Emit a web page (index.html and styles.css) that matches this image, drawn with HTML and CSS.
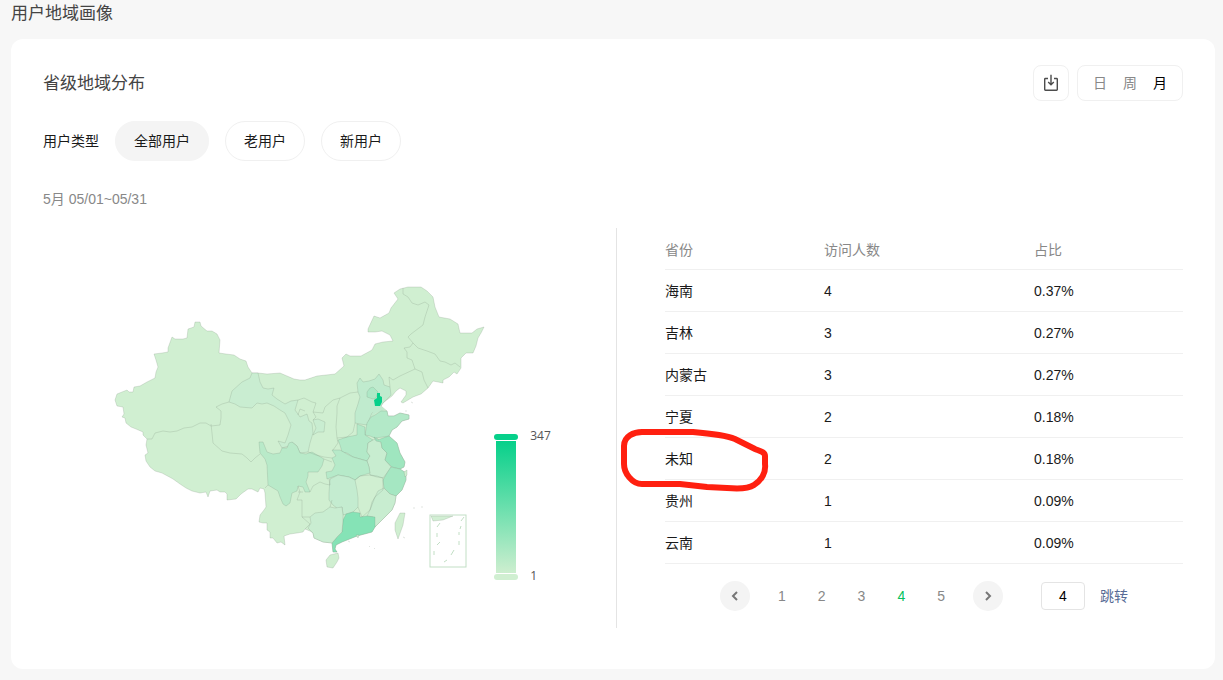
FILE: index.html
```html
<!DOCTYPE html>
<html lang="zh-CN">
<head>
    <meta charset="UTF-8">
    <meta name="viewport" content="width=device-width, initial-scale=1.0">
    <title>用户地域画像</title>
    <link rel="stylesheet" href="styles.css">
</head>
<body>
    <h1>用户地域画像</h1>
    <main class="card">
        <header class="card-header">
            <h2>省级地域分布</h2>
            <div class="tools">
                <button class="btn-download" type="button" aria-label="下载">
                    <svg width="16" height="18" viewBox="0 0 16 18" fill="none" stroke="#4c4c4c" stroke-width="1.400">
                        <path d="M5 4.500H2.400a.7.7 0 0 0-.7.7v10.400c0 .4.3.7.7.7h11.200c.4 0 .7-.3.7-.7V5.200c0-.4-.3-.7-.7-.7H11"/>
                        <path d="M8 .8v10M5.200 8l2.800 2.800L10.800 8"/>
                    </svg>
                </button>
                <div class="period">
                    <button type="button">日</button>
                    <button type="button">周</button>
                    <button type="button" class="active">月</button>
                </div>
            </div>
        </header>

        <div class="filters">
            <span>用户类型</span>
            <button type="button" class="active">全部用户</button>
            <button type="button">老用户</button>
            <button type="button">新用户</button>
        </div>
        <p class="date">5月 05/01~05/31</p>

        <div class="content">
            <!-- 地图 -->
            <section class="map-panel">
                <svg class="map" viewBox="112 284 376 296" role="img" aria-label="中国地图">
                    <path class="land" d="M115 400L117 394 122 392 127 390 129 392 133 392 134 387 140 386 147 382 155 378 156 372 158 367 156 360 154 354 162 353 168 352 168 348 172 337 175 339 183 339 187 338 188 329 194 327 195 322 200 322 201 326 207 331 212 331 217 334 220 340 219 353 226 354 234 355 240 359 246 361 248 367 252 373 258 373 267 374 280 373 287 376 294 379 300 380 305 380 317 376 335 374 344 366 342 358 346 354 350 356 361 356 372 350 375 344 383 342 393 341 390 335 382 331 375 332 368 332 368 329 374 316 380 318 389 313 391 308 398 299 394 293 400 289 408 287 421 287 427 291 433 297 435 307 439 317 450 319 458 324 460 333 472 333 477 329 484 327 481 333 478 338 476 346 473 353 466 353 461 358 461 368 457 374 454 372 449 377 443 380 443 383 433 381 428 388 421 394 413 397 403 403 401 402 406 395 406 391 400 388 396 391 392 396 383 403 381 406 387 411 388 416 394 416 400 413 409 415 409 419 402 421 397 427 392 430 389 436 397 443 400 453 405 462 404 467 400 469 406 473 406 480 402 490 396 496 395 503 392 510 383 519 375 527 372 532 357 536 342 542 336 545 335 549 337 552 333 552 332 543 323 542 314 538 313 533 310 531 305 529 303 532 297 533 290 534 284 536 285 545 281 542 277 543 273 538 270 538 270 532 267 530 267 523 263 523 259 522 260 515 264 510 266 507 265 493 264 489 260 488 258 492 252 489 248 489 241 494 236 499 227 500 227 494 225 492 220 492 217 490 210 491 208 497 206 492 200 493 192 491 186 488 180 484 173 479 162 473 155 471 150 467 146 461 145 455 148 453 146 445 147 439 143 435 143 432 136 429 131 427 126 423 125 418 122 417 124 414 123 407 117 406Z"/>
                    <path fill="#c9edd1" d="M252 373L258 373 260 382 263 388 268 389 274 388 272 395 277 399 285 404 291 401 298 400 295 410 300 417 307 414 309 421 312 423 313 433 310 443 308 452 300 453 297 446 292 442 289 446 282 448 278 441 285 443 288 435 291 425 285 413 280 410 274 406 267 403 262 404 257 403 252 408 240 407 235 404 229 402 232 391 242 382 250 378Z"/>
                    <path fill="#c9edd1" d="M313 420L318 419 325 422 324 432 318 432 313 435 316 428Z"/>
                    <path fill="#b9eac9" d="M259 442L263 442 267 452 273 454 280 453 282 448 287 448 289 443 292 442 297 446 300 453 306 454 312 452 324 459 322 466 318 472 314 472 308 472 308 476 306 482 310 492 305 492 303 487 298 486 297 491 292 493 290 503 286 506 283 504 280 497 278 491 273 488 268 485 267 465 265 459 260 453Z"/>
                    <path fill="#c0ebce" d="M358 392L357 383 360 378 363 382 369 381 375 379 379 374 383 380 384 385 390 387 391 395 383 403 381 406 376 410 372 413 367 425 360 424 355 423 355 413 358 404 360 397Z"/>
                    <path fill="#c0ebce" d="M376 404L381 406 385 410 376 413 371 417Z" class="plain"/>
                    <path fill="#aee8c6" d="M367 392L370 388 373 387 376 390 378 392 376 398 373 399 367 397Z"/>
                    <path fill="#06d08a" class="plain" d="M377 393L380 393 380 396 382 397 382 402 380 406 375 406 374 400 377 398Z"/>
                    <path fill="#b3e9c8" d="M367 423L371 417 375 415 381 411 387 411 388 416 394 416 400 413 409 415 409 419 402 421 397 427 392 430 389 436 383 437 375 438 370 436 365 435Z"/>
                    <path fill="#b3e9c8" d="M338 440L347 437 357 435 357 424 365 427 365 435 373 440 368 443 367 452 370 456 367 461 360 459 353 457 347 453 342 452 340 445Z"/>
                    <path fill="#c8edd0" d="M373 440L377 438 381 442 382 448 387 453 385 460 391 467 387 473 383 478 377 477 370 475 369 467 367 461 370 456 367 452 368 443Z"/>
                    <path fill="#9fe6bf" d="M374 437L378 440 383 438 389 436 397 443 400 453 405 462 404 467 400 469 392 467 385 460 387 453 382 448 381 442 376 441Z"/>
                    <path fill="#a5e7c2" d="M391 467L400 469 406 473 406 480 402 490 396 496 390 494 384 488 383 480 387 473Z"/>
                    <path fill="#b6eac9" d="M332 458L336 456 332 450 340 450 347 454 353 457 360 459 367 461 369 467 370 473 360 476 355 480 349 477 338 475 327 479 326 472 332 471 335 465Z"/>
                    <path fill="#c4ecd0" d="M330 479L338 475 349 477 355 480 356 485 357 490 358 498 358 507 353 512 343 515 342 507 338 509 333 505 329 500 329 493Z"/>
                    <path fill="#c8edd0" d="M384 488L390 494 396 496 395 503 392 510 383 519 375 527 373 517 367 516 370 510 372 502 375 497 378 491Z"/>
                    <path fill="#85e3b6" d="M353 512L360 513 360 517 367 516 375 517 375 527 372 532 357 536 342 542 336 545 335 549 337 552 333 552 332 543 337 537 342 532 343 520 346 514Z"/>
                    <path fill="#c9edd1" d="M310 517L315 513 323 512 330 507 335 508 342 507 343 515 343 520 342 532 337 537 332 543 323 542 314 538 313 533 308 528 311 523Z"/>
                    <!-- 省界 -->
                    <g class="borders">
                        <path d="M229 402L222 404 216 407 221 411 221 418 220 425 211 426 206 423 200 423 192 427 184 428 177 431 170 432 163 431 155 433 152 439 147 439"/>
                        <path d="M211 424L212 433 213 443 222 451 230 453 242 454 247 458 251 462 255 458 260 454M268 485L265 488M298 400L304 398 312 402 316 403 313 412 323 413 325 407 333 400 340 398 350 393 358 392"/>
                        <path d="M298 415L300 409 305 411M313 412L316 417 313 420M340 398L337 406 337 413 336 427 337 438 347 437 353 432 355 423M337 438L338 443 333 450M308 452L316 455 324 457 332 458"/>
                        <path d="M390 387L389 377 393 380 400 376 415 369 422 372 424 380 428 388M415 369L412 360 407 358 407 352 404 348 410 347 413 343 408 337 411 334 423 325 425 317 429 305 425 302 418 305 412 303 408 297 403 294 403 288M413 343L418 348 427 351 435 354 440 361 445 362 451 365 455 363 460 367"/>
                        <path d="M355 480L360 476 370 475 377 476 383 478 383 490 375 497 370 510 362 517 358 507M310 492L313 486 320 482 325 484 330 485 329 479M298 492L303 492M298 486L300 492 297 500 302 500 302 505 302 517 310 517M302 517L310 524 305 529M332 500L330 507M324 459L332 462"/>
                    </g>
                    <path class="land" d="M326 560L330 555 338 553 339 558 337 562 333 568 327 567ZM400 513L405 513 403 525 398 539 395 530 395 523ZM404 472L407 470 407 475 405 477ZM356 535L359 535 358 538ZM413 508L415 508M421 507L423 507M369 546L370 547M374 548L375 549M348 541L350 542M403 537L405 538M405 411L407 411M411 402L413 403"/>
                    <path fill="#d2efd4" d="M431 516H453L443 520 433 521Z"/>
                    <rect class="inset" x="430" y="515" width="36" height="52"/>
                    <path class="dashes" d="M440 523L437 527M437 533V537M440 542L437 545M434 551V555M444 562L447 560M454 550L451 555M459 541L459 545M459 532V535M461 526L460 529M464 517L461 521"/>
                </svg>
                <div class="legend">
                    <div class="legend-bar">
                        <i class="cap high"></i>
                        <i class="ramp"></i>
                        <i class="cap low"></i>
                    </div>
                    <div class="legend-text">
                        <span>347</span>
                        <span>1</span>
                    </div>
                </div>
            </section>

            <!-- 数据表 -->
            <section class="table-panel">
                <table>
                    <thead>
                        <tr><th>省份</th><th>访问人数</th><th>占比</th></tr>
                    </thead>
                    <tbody>
                        <tr><td>海南</td><td>4</td><td>0.37%</td></tr>
                        <tr><td>吉林</td><td>3</td><td>0.27%</td></tr>
                        <tr><td>内蒙古</td><td>3</td><td>0.27%</td></tr>
                        <tr><td>宁夏</td><td>2</td><td>0.18%</td></tr>
                        <tr>
                            <td class="marked">未知
                                <svg class="mark" width="150" height="66" viewBox="619 427 150 66">
                                    <path d="M642 432C634 432 624 436 624 446V464C624 473 632 484 642 484L680 484 707 487 727 488C738 489 748 489 754 485C762 480 766 472 765 464V456C765 452 760 451 755 449L735 439C725 435 705 433 693 432Z"/>
                                </svg>
                            </td>
                            <td>2</td><td>0.18%</td>
                        </tr>
                        <tr><td>贵州</td><td>1</td><td>0.09%</td></tr>
                        <tr><td>云南</td><td>1</td><td>0.09%</td></tr>
                    </tbody>
                </table>
                <nav class="pager">
                    <button class="arrow" type="button" aria-label="上一页">
                        <svg width="8" height="12" viewBox="0 0 8 12"><path d="M6 2L2 6l4 4"/></svg>
                    </button>
                    <div class="pages">
                        <a href="#">1</a>
                        <a href="#">2</a>
                        <a href="#">3</a>
                        <a href="#" class="active">4</a>
                        <a href="#">5</a>
                    </div>
                    <button class="arrow" type="button" aria-label="下一页">
                        <svg width="8" height="12" viewBox="0 0 8 12"><path d="M2 2l4 4-4 4"/></svg>
                    </button>
                    <input type="text" value="4" aria-label="页码">
                    <a href="#" class="jump">跳转</a>
                </nav>
            </section>
        </div>
    </main>
</body>
</html>
```
FILE: styles.css
```css
* {
    box-sizing: border-box;
}
body {
    margin: 0;
    padding: 0 8px 11px 11px;
    background-color: #f7f7f7;
    font-family: "Liberation Sans", "Noto Sans CJK SC", sans-serif;
    font-size: 14px;
    line-height: 20px;
    color: #1a1a1a;
}
h1, h2 {
    margin: 0;
    padding-top: 2px;
    font-size: 17px;
    font-weight: 400;
    line-height: 24px;
    color: #444;
}
h1 {
    margin-bottom: 13px;
}
button, input {
    font: inherit;
    color: inherit;
}
button {
    padding: 0;
    border: none;
    background: none;
    cursor: pointer;
}
a {
    color: inherit;
    text-decoration: none;
}
.card {
    background-color: #fff;
    border-radius: 12px;
    padding: 26px 32px 41px;
}
.card-header {
    display: flex;
    justify-content: space-between;
    align-items: center;
    height: 36px;
}
.tools {
    display: flex;
    gap: 8px;
}
.btn-download, .period {
    display: flex;
    align-items: center;
    justify-content: center;
    height: 36px;
    border: 1px solid #f0f0f0;
    border-radius: 8px;
}
.btn-download {
    width: 36px;
}
.period {
    gap: 16px;
    padding: 0 15px;
    color: #888;
}
.period .active {
    color: #000;
}

/* 用户类型 */
.filters {
    display: flex;
    align-items: center;
    gap: 16px;
    margin-top: 20px;
}
.filters button {
    height: 40px;
    padding: 0 18px;
    border: 1px solid #f0f0f0;
    border-radius: 20px;
}
.filters .active {
    background-color: #f4f4f4;
    border-color: #f4f4f4;
}
.date {
    margin: 28px 0 19px;
    color: #888;
}

.content {
    display: grid;
    grid-template-columns: 573fr 567fr;
    min-height: 400px;
}
.map-panel {
    display: flex;
    justify-content: center;
    align-items: flex-end;
    padding: 0 4px 48px 8px;
}
.map {
    width: 376px;
    height: 296px;
    margin-right: 6px;
}
.map path {
    stroke: rgba(120, 135, 120, 0.22);
    stroke-width: 1;
    stroke-linejoin: round;
}
.map .plain {
    stroke: none;
}
.map .land {
    fill: #d0efd1;
}
.map .borders path {
    fill: none;
}
.map .inset, .map .dashes {
    fill: none;
    stroke: #c2dfc5;
}
.legend {
    display: flex;
    gap: 12px;
}
.legend-bar {
    display: flex;
    flex-direction: column;
    align-items: center;
    gap: 1px;
}
.cap {
    width: 24px;
    height: 6px;
    border-radius: 3px;
}
.high {
    background-color: #06d08a;
}
.low {
    background-color: #d0efd1;
}
.ramp {
    width: 20px;
    height: 132px;
    background: linear-gradient(#06d08a, #cdeecf);
}
.legend-text {
    display: flex;
    flex-direction: column;
    justify-content: space-between;
    margin-top: -2px;
    font-family: "Open Sans", sans-serif;
    font-size: 12px;
    line-height: 8px;
    color: #555;
}

/* 表格 */
.table-panel {
    border-left: 1px solid #e4e4e4;
    padding-left: 48px;
}
table {
    width: 100%;
    border-spacing: 0;
    table-layout: fixed;
}
th, td {
    height: 42px;
    padding: 0;
    border-bottom: 1px solid #f0f0f0;
    text-align: left;
}
th {
    padding-top: 2px;
    font-weight: normal;
    color: #888;
}
th:first-child {
    width: 159px;
}
th:nth-child(2) {
    width: 210px;
}
.marked {
    position: relative;
}
.mark {
    position: absolute;
    left: -46px;
    top: -11px;
    pointer-events: none;
}
.mark path {
    fill: none;
    stroke: #ff2010;
    stroke-width: 6;
}

/* 分页 */
.pager {
    display: flex;
    align-items: center;
    justify-content: center;
    margin-top: 17px;
    color: #888;
}
.arrow {
    display: flex;
    align-items: center;
    justify-content: center;
    width: 30px;
    height: 30px;
    border-radius: 50%;
    background-color: #f4f4f4;
}
.arrow path {
    fill: none;
    stroke: #777;
    stroke-width: 2;
}
.pages {
    display: flex;
    gap: 32px;
    margin: 0 28px;
}
.pages .active {
    color: #07c160;
}
.pager input {
    width: 44px;
    height: 28px;
    margin: 0 15px 0 38px;
    padding: 0;
    border: 1px solid #e4e4e4;
    border-radius: 4px;
    text-align: center;
    color: #000;
}
.jump {
    color: #576b95;
}
```
